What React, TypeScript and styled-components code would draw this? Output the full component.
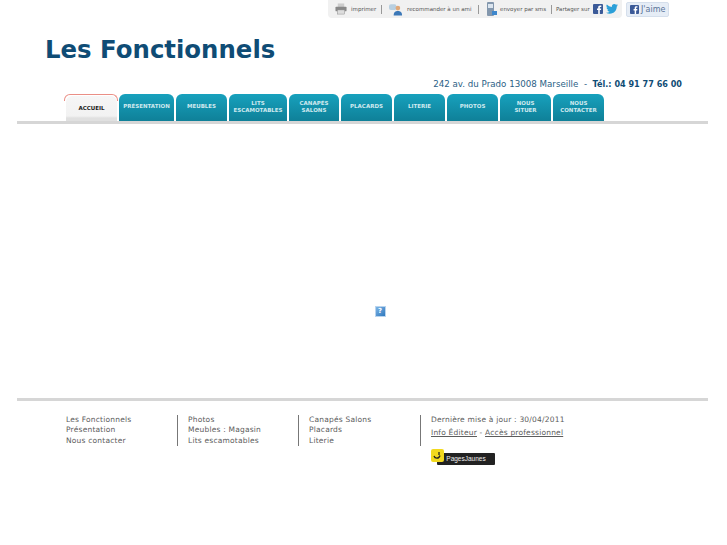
import React from 'react';
import styled, { createGlobalStyle } from 'styled-components';

const Global = createGlobalStyle`
  html, body { margin: 0; padding: 0; background: #fff; }
  body { font-family: "DejaVu Sans", Verdana, sans-serif; }
`;

const Page = styled.div`width: 727px; height: 545px; overflow: hidden; display: flex; flex-direction: column;`;
const TopRow = styled.div`display: flex; height: 18px; padding-left: 328px; gap: 4px;`;
const ToolBar = styled.div`width: 294px; height: 18px; box-sizing: border-box; background: #f1f1f1; border-radius: 0 0 4px 4px; display: flex; align-items: center; padding-left: 7px; font-size: 5.5px; color: #555;`;
const Tool = styled.span<{ $w: number; $gap: number }>`display: flex; align-items: center; gap: ${p => p.$gap}px; width: ${p => p.$w}px; flex: none; white-space: nowrap;`;
const Sep = styled.span<{ $after: number }>`width: 1px; height: 9px; background: #999; flex: none; margin-right: ${p => p.$after}px;`;
const LikeButton = styled.div`margin-top: 2px; width: 43px; height: 15px; box-sizing: border-box; background: #e6edf6; border: 1px solid #d5dfec; border-radius: 2px; display: flex; align-items: center; gap: 2px; padding-left: 3px; font-size: 8px; color: #5a7499;`;
const Title = styled.h1`margin: 17px 0 0 45px; height: 30px; line-height: 30px; font-size: 24.4px; font-weight: 700; color: #0f4c75;`;
const Address = styled.div`margin-top: 12px; height: 14px; line-height: 14px; padding-right: 45px; text-align: right; font-size: 8.7px; color: #2b6185; b { color: #0f4c75; font-size: 8.1px; }`;
const Tabs = styled.nav`margin-top: 3px; padding-left: 66px; display: flex; gap: 2px; height: 27px; align-items: flex-end;`;
const Tab = styled.a<{ $w: number; $active?: boolean }>`
  position: relative;
  width: ${p => p.$w}px; flex: none; height: ${p => (p.$active ? 25 : 27)}px; box-sizing: border-box;
  display: flex; align-items: center; justify-content: center; text-align: center;
  padding-bottom: ${p => (p.$active ? 1 : 2)}px;
  border-radius: 6px 6px 0 0; font-size: 5.5px; line-height: 6.5px; font-weight: 700;
  color: ${p => (p.$active ? '#222' : '#cfe9ef')};
  background: ${p => (p.$active ? 'linear-gradient(#f6f6f6, #f2f2f2 80%, #e0e0e0 88%)' : 'linear-gradient(#17a1bd, #0f8098)')};
  ${p => p.$active && `
    &::before {
      content: ''; position: absolute; left: -2px; right: -1px; top: -2px; height: 7px;
      border: 1px solid #ea8f86; border-bottom: 0; border-radius: 6px 6px 0 0; box-sizing: border-box;
    }
  `}
`;
const Rule = styled.div`margin: 0 19px 0 17px; height: 3px; background: #d6d6d6;`;
const Content = styled.div`height: 274px; display: flex; justify-content: center; padding: 182px 0 0 33px; box-sizing: border-box;`;
const Broken = styled.div`width: 11px; height: 11px; background: linear-gradient(135deg, #7db4e6, #2f78bd); border: 1px solid #b9d4ee; box-sizing: border-box; color: #fff; font-size: 7px; font-weight: 700; line-height: 9px; text-align: center;`;
const Footer = styled.footer`padding: 14px 0 0 66px; display: grid; grid-template-columns: 111px 121px 122px auto; font-size: 7.5px; line-height: 10.3px; letter-spacing: 0.2px; color: #5c5c5c;`;
const Col = styled.div<{ $first?: boolean }>`height: 31px; ${p => (p.$first ? '' : 'border-left: 1px solid #777; padding-left: 10px;')}`;
const FooterLinks = styled.div`margin-top: 3px; a { color: #5c5c5c; text-decoration: underline; }`;
const PagesJaunes = styled.div`position: relative; margin-top: 10px; width: 65px; height: 16px;`;
const PjLabel = styled.div`position: absolute; left: 6px; top: 4px; width: 58px; height: 12px; background: #222; border-radius: 1px; color: #eee; font-size: 6.5px; letter-spacing: 0; line-height: 12px; text-align: center; font-family: "Liberation Sans", sans-serif;`;
const PjSmile = styled.div`position: absolute; left: 0; top: 0; width: 13px; height: 13px; background: #f2d91e; border-radius: 2px;`;

const Printer = () => (
  <svg width="12" height="12" viewBox="0 0 13 12" style={{ flex: 'none' }}><rect x="3" y="0" width="7" height="4" fill="#ccc" /><rect x="0.5" y="3.5" width="12" height="5" rx="1" fill="#888" /><rect x="2.5" y="7" width="8" height="4.5" fill="#ddd" stroke="#888" strokeWidth="0.5" /></svg>
);
const People = () => (
  <svg width="14" height="13" viewBox="0 0 15 13" style={{ flex: 'none' }}><rect x="0" y="1" width="8" height="6" rx="2" fill="#b8cfe0" /><circle cx="9.5" cy="5" r="2.5" fill="#e0a878" /><path d="M5 13c0-4 2-5 4.5-5s4.5 1 4.5 5z" fill="#3c78b8" /></svg>
);
const Phone = () => (
  <svg width="12" height="15" viewBox="0 0 12 15" style={{ flex: 'none' }}><rect x="1" y="0" width="7" height="14" rx="1" fill="#8397ad" /><rect x="2" y="2" width="5" height="4" fill="#dbe5ef" /><path d="M6 9h5v4H6z" fill="#3d86cc" /></svg>
);
const Fb = ({ s }: { s: number }) => (
  <svg width={s} height={s} viewBox="0 0 10 10" style={{ flex: 'none' }}><rect width="10" height="10" fill="#3b5a98" rx="1" /><path d="M6.8 10V6h1.2l.2-1.5H6.8v-.9c0-.5.2-.7.7-.7h.8V1.5H7.1C5.8 1.5 5.2 2.2 5.2 3.4v1.1H4V6h1.2v4z" fill="#fff" /></svg>
);
const Bird = () => (
  <svg width="12" height="10" viewBox="0 0 24 20" style={{ flex: 'none' }}><path d="M24 2.4a10 10 0 0 1-2.8.8A5 5 0 0 0 23.3.5a10 10 0 0 1-3.1 1.2A4.9 4.9 0 0 0 11.8 6 14 14 0 0 1 1.7.9a4.9 4.9 0 0 0 1.5 6.6A5 5 0 0 1 1 6.9v.1a4.9 4.9 0 0 0 3.9 4.8 5 5 0 0 1-2.2.1 4.900 4.900 0 0 0 4.600 3.400A10 10 0 0 1 0 17.400 14 14 0 0 0 7.500 19.600c9 0 14-7.500 14-14v-.6A10 10 0 0 0 24 2.400z" fill="#2b9fd8" /></svg>
);
const Smile = () => (
  <svg width="13" height="13" viewBox="0 0 13 13"><path d="M3 7c1 3 5 3 6-.5M8 3v3" stroke="#222" strokeWidth="1.3" fill="none" /></svg>
);

const tabs: { label: React.ReactNode; w: number; active?: boolean }[] = [
  { label: 'ACCUEIL', w: 51, active: true },
  { label: 'PRÉSENTATION', w: 55 },
  { label: 'MEUBLES', w: 51 },
  { label: <>LITS<br />ESCAMOTABLES</>, w: 58 },
  { label: <>CANAPÉS<br />SALONS</>, w: 50 },
  { label: 'PLACARDS', w: 51 },
  { label: 'LITERIE', w: 51 },
  { label: 'PHOTOS', w: 51 },
  { label: <>NOUS<br />SITUER</>, w: 51 },
  { label: <>NOUS<br />CONTACTER</>, w: 51 },
];

export default function App() {
  return (
    <Page>
      <Global />
      <TopRow>
        <ToolBar>
          <Tool $w={46} $gap={4}><Printer />imprimer</Tool>
          <Sep $after={7} />
          <Tool $w={89} $gap={4}><People />recommander à un ami</Tool>
          <Sep $after={7} />
          <Tool $w={65} $gap={2}><Phone />envoyer par sms</Tool>
          <Sep $after={4} />
          <Tool $w={64} $gap={3}>Partager sur <Fb s={10} /><Bird /></Tool>
        </ToolBar>
        <LikeButton><Fb s={9} />J'aime</LikeButton>
      </TopRow>
      <Title>Les Fonctionnels</Title>
      <Address>242 av. du Prado 13008 Marseille &nbsp;-&nbsp; <b>Tél.: 04 91 77 66 00</b></Address>
      <Tabs>
        {tabs.map((t, i) => (
          <Tab key={i} $w={t.w} $active={t.active}>{t.label}</Tab>
        ))}
      </Tabs>
      <Rule />
      <Content><Broken>?</Broken></Content>
      <Rule />
      <Footer>
        <Col $first>Les Fonctionnels<br />Présentation<br />Nous contacter</Col>
        <Col>Photos<br />Meubles : Magasin<br />Lits escamotables</Col>
        <Col>Canapés Salons<br />Placards<br />Literie</Col>
        <Col>
          Dernière mise à jour : 30/04/2011
          <FooterLinks><a>Info Éditeur</a> - <a>Accès professionnel</a></FooterLinks>
          <PagesJaunes>
            <PjLabel>PagesJaunes</PjLabel>
            <PjSmile><Smile /></PjSmile>
          </PagesJaunes>
        </Col>
      </Footer>
    </Page>
  );
}
